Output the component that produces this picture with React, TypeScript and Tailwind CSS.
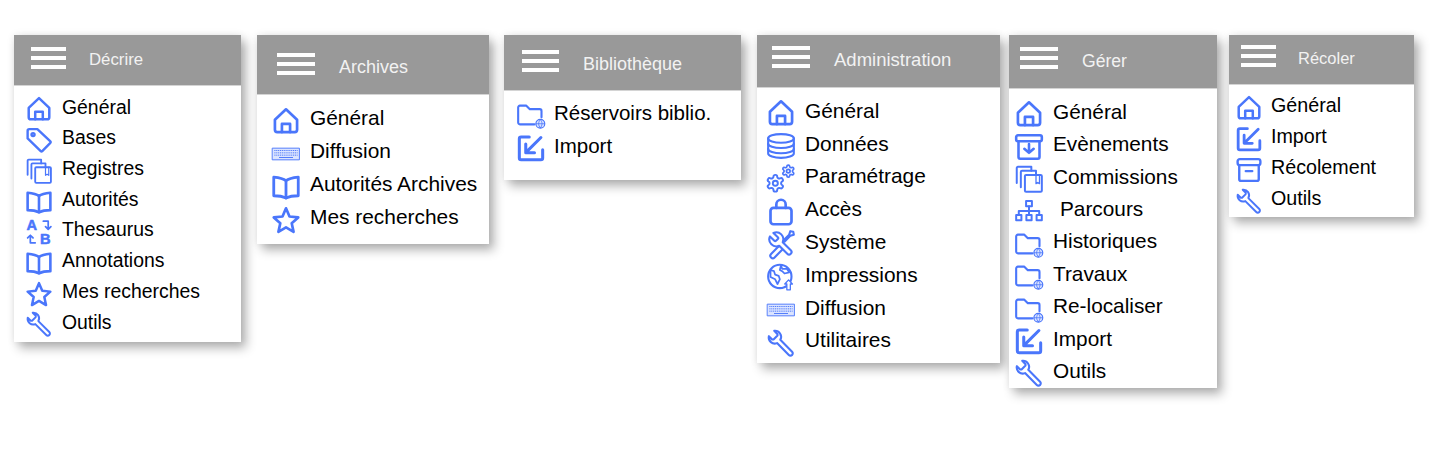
import type { ReactNode } from "react";

// Icons are hand drawn on a 24 unit grid, stroke colour comes from the svg wrapper
const BLUE = "#4a76fb";

function Svg({ size, w = 2, children }: { size: number; w?: number; children: ReactNode }) {
  return (
    <svg className="overflow-visible" width={size} height={size} viewBox="0 0 24 24" fill="none" stroke={BLUE} strokeWidth={w} strokeLinecap="round" strokeLinejoin="round">
      {children}
    </svg>
  );
}

const WRENCH = "M14.7 6.3a1 1 0 0 0 0 1.4l1.6 1.6a1 1 0 0 0 1.4 0l3.77-3.77a6 6 0 0 1-7.94 7.94l-6.91 6.91a2.12 2.12 0 0 1-3-3l6.91-6.91a6 6 0 0 1 7.94-7.94l-3.76 3.76z";
const GEAR = "M12.22 2h-.44a2 2 0 0 0-2 2v.18a2 2 0 0 1-1 1.73l-.43.25a2 2 0 0 1-2 0l-.15-.08a2 2 0 0 0-2.73.73l-.22.38a2 2 0 0 0 .73 2.73l.15.1a2 2 0 0 1 1 1.72v.51a2 2 0 0 1-1 1.74l-.15.09a2 2 0 0 0-.73 2.73l.22.38a2 2 0 0 0 2.73.73l.15-.08a2 2 0 0 1 2 0l.43.25a2 2 0 0 1 1 1.73V20a2 2 0 0 0 2 2h.44a2 2 0 0 0 2-2v-.18a2 2 0 0 1 1-1.73l.43-.25a2 2 0 0 1 2 0l.15.08a2 2 0 0 0 2.73-.73l.22-.39a2 2 0 0 0-.73-2.73l-.15-.08a2 2 0 0 1-1-1.74v-.5a2 2 0 0 1 1-1.74l.15-.09a2 2 0 0 0 .73-2.73l-.22-.38a2 2 0 0 0-2.73-.73l-.15.08a2 2 0 0 1-2 0l-.43-.25a2 2 0 0 1-1-1.73V4a2 2 0 0 0-2-2z";

const icons: Record<string, (size: number) => ReactNode> = {
  home: (s) => (
    <Svg size={s} w={2.300}>
      <path d="M12 2 2.500 11v8.500a2 2 0 0 0 2 2h15a2 2 0 0 0 2-2V11z" />
      <path d="M8.500 21.500v-7h7v7" />
    </Svg>
  ),
  tag: (s) => (
    <Svg size={s} w={2.200}>
      <path d="M1.500 3.500a1.500 1.500 0 0 1 1.500-1.500h7.500L22.500 13.200a1 1 0 0 1 0 1.400l-7.500 7.600a1 1 0 0 1-1.400 0L1.500 10.500z" />
      <circle cx="6.500" cy="7" r="1.400" />
    </Svg>
  ),
  registers: (s) => (
    <Svg size={s} w={1.700}>
      <rect x="8.500" y="8.500" width="14.500" height="14.500" rx="1" />
      <path d="M5 19V6a1 1 0 0 1 1-1h12v3.500" />
      <path d="M1.500 15.500V2.500a1 1 0 0 1 1-1H14V5" />
      <path d="M18 8.500V16l1.500-1 1.500 1V8.500" strokeWidth="1.100" />
    </Svg>
  ),
  book: (s) => (
    <Svg size={s} w={2.400}>
      <path d="M12 6.500C10 5 6 4 1.500 3.500v16c4.500 0 8.500 1 10.500 2 2-1 6-2 10.500-2v-16C18 4 14 5 12 6.500z" />
      <path d="M12 6.500v15" />
    </Svg>
  ),
  ab: (s) => (
    <Svg size={s} w={1.600}>
      <text x="0.500" y="10.500" fontFamily="'Liberation Sans', sans-serif" fontWeight="700" fontSize="13.500" fill={BLUE} stroke={BLUE} strokeWidth=".5">A</text>
      <text x="13" y="23.500" fontFamily="'Liberation Sans', sans-serif" fontWeight="700" fontSize="13.500" fill={BLUE} stroke={BLUE} strokeWidth=".5">B</text>
      <path d="M16 2h4.500v7M18 7l2.500 2.500L23 7" />
      <path d="M8.500 22H4v-7M1.500 17.500 4 15l2.500 2.500" />
    </Svg>
  ),
  star: (s) => (
    <Svg size={s} w={2.300}>
      <path d="M12 2l3 7 7.500.8-5.600 5 1.600 7.400L12 18.400l-6.500 3.800 1.600-7.400-5.600-5L9 9z" />
    </Svg>
  ),
  wrench: (s) => (
    <Svg size={s} w={1.800}>
      <path d="M6.200 1.600 9 4.400v1.200L5.600 9H4.400L1.600 6.200A5.200 5.200 0 0 0 8.600 12.100L18.700 22.200a1.900 1.900 0 0 0 2.800-2.800L11.400 9.300A5.200 5.200 0 0 0 6.200 1.600z" />
    </Svg>
  ),
  keyboard: (s) => (
    <Svg size={s} w={0.800}>
      <rect x="0.500" y="7" width="23" height="10" fill="#dbe4ff" />
      <path d="M2 9h20M2 11h20M2 13h20" strokeDasharray="1 .6" strokeLinecap="butt" />
      <path d="M6 15h12" strokeLinecap="butt" />
    </Svg>
  ),
  folder: (s) => (
    <Svg size={s} w={1.800}>
      <path d="M15 20H2.500A1.500 1.500 0 0 1 1 18.500V5.500A1.500 1.500 0 0 1 2.500 4H8l3 3h8.500A1.500 1.500 0 0 1 21 8.500V14" />
      <circle cx="20" cy="19.500" r="3.800" fill="#dbe4ff" strokeWidth="1" />
      <path d="M16.500 19.500h7M20 16c-2 2-2 5 0 7M20 16c2 2 2 5 0 7" strokeWidth=".7" />
    </Svg>
  ),
  importbox: (s) => (
    <Svg size={s} w={2.600}>
      <path d="M10.500 2.500H3.500a1.500 1.500 0 0 0-1.500 1.500v16.500a1.500 1.500 0 0 0 1.500 1.500h17a1.500 1.500 0 0 0 1.500-1.500v-7" />
      <path d="M20.500 3 7.500 16M7.500 8.500V16h7.500" />
    </Svg>
  ),
  database: (s) => (
    <Svg size={s} w={1.800}>
      <ellipse cx="12" cy="5.500" rx="11" ry="3.700" />
      <path d="M1 5.500v13c0 2 5 3.700 11 3.700s11-1.700 11-3.700v-13" />
      <path d="M1 10c0 2 5 3.700 11 3.700S23 12 23 10M1 14.500c0 2 5 3.700 11 3.700s11-1.700 11-3.700" />
    </Svg>
  ),
  gears: (s) => (
    <Svg size={s}>
      <g transform="translate(-1.500 7) scale(.72)" strokeWidth="2.300">
        <path d={GEAR} />
        <circle cx="12" cy="12" r="3" />
      </g>
      <g transform="translate(12 -1) scale(.52)" strokeWidth="2.800">
        <path d={GEAR} />
        <circle cx="12" cy="12" r="3" />
      </g>
    </Svg>
  ),
  lock: (s) => (
    <Svg size={s} w={2.300}>
      <rect x="3" y="8.500" width="18" height="14" rx="2.500" />
      <path d="M8 8.500V5.500a4 4 0 0 1 8 0v3" />
    </Svg>
  ),
  tools: (s) => (
    <Svg size={s} w={1.800}>
      <g transform="translate(24 0) scale(-1 1)">
        <path d={WRENCH} />
      </g>
      <path d="M22.500 1.500 20 1l-1 3-5 5 1 1 5-5 3-1z" />
      <path d="M10 14l-6.500 6.500a2 2 0 0 0 3 3L13 17" />
    </Svg>
  ),
  globe: (s) => (
    <Svg size={s} w={1.800}>
      <circle cx="11" cy="11.500" r="10" />
      <path d="M3 6l3 1 1 3 3 1 1 3-2 4-2-4-4-2zM12 2l1 3 4 0 2 3-4 1-2-2-2-1z" strokeWidth="1.500" />
      <path d="M17 23v-5h-1.800l3.300-3.500 3.300 3.500H20v5z" fill="#fff" strokeWidth="1.100" />
    </Svg>
  ),
  archive: (s) => (
    <Svg size={s} w={2.200}>
      <rect x="1" y="2" width="22" height="5" rx="1.500" />
      <path d="M3 7v13.500A1.500 1.500 0 0 0 4.500 22h15a1.500 1.500 0 0 0 1.500-1.500V7" />
      <path d="M12 9.500V17M8 13.500l4 3.500 4-3.500" />
    </Svg>
  ),
  sitemap: (s) => (
    <Svg size={s} w={1.700}>
      <rect x="9.500" y="3.500" width="5" height="4.500" />
      <rect x="1" y="15.500" width="4.500" height="4.500" />
      <rect x="9.750" y="15.500" width="4.500" height="4.500" />
      <rect x="18.500" y="15.500" width="4.500" height="4.500" />
      <path d="M12 8v7.500M3.250 15.500v-3.500h17.500v3.500" />
    </Svg>
  ),
  recolement: (s) => (
    <Svg size={s} w={2.200}>
      <rect x="1.500" y="2" width="21" height="5.500" rx="2" />
      <path d="M3 7.500v13A1.500 1.500 0 0 0 4.500 22h15a1.500 1.500 0 0 0 1.500-1.500v-13" />
      <path d="M9 13h6" />
    </Svg>
  ),
};

type Item = { label: string; icon: string; textClass?: string };

type PanelProps = {
  title: string;
  panelClass: string;
  headerClass: string;
  burgerClass: string;
  burgerWidth: number;
  titleClass: string;
  bodyClass: string;
  rowClass: string;
  iconBoxClass: string;
  iconSize: number;
  items: Item[];
};

function Burger({ width }: { width: number }) {
  return (
    <svg width={width} height="23" viewBox={`0 0 ${width} 23`} fill="#fff">
      <rect y="1" width={width} height="4" />
      <rect y="10" width={width} height="4" />
      <rect y="19" width={width} height="4" />
    </svg>
  );
}

function Panel(p: PanelProps) {
  return (
    <section className={`shrink-0 bg-white shadow-[5px_6px_10px_rgba(0,0,0,0.3),0_0_8px_rgba(0,0,0,0.08)] ${p.panelClass}`}>
      <header className={`flex border-b border-[#d4d4d4] bg-[#999999] ${p.headerClass}`}>
        <div className={`shrink-0 ${p.burgerClass}`}>
          <Burger width={p.burgerWidth} />
        </div>
        <span className={`leading-none text-[#f2f2f2] ${p.titleClass}`}>{p.title}</span>
      </header>
      <ul className={p.bodyClass}>
        {p.items.map((item) => (
          <li key={item.label} className={`flex items-center ${p.rowClass}`}>
            <span className={`flex shrink-0 translate-y-[2px] ${p.iconBoxClass}`}>{icons[item.icon](p.iconSize)}</span>
            <span className={`leading-none text-black ${item.textClass ?? ""}`}>{item.label}</span>
          </li>
        ))}
      </ul>
    </section>
  );
}

export default function App() {
  return (
    <div className="flex h-[453px] items-start overflow-hidden bg-white pt-[35px] pl-[14px] font-['Liberation_Sans',Arial,sans-serif]">
      <Panel
        title="Décrire"
        panelClass="mr-[16px] w-[227px]"
        headerClass="h-[51px]"
        burgerClass="mt-[11px] ml-[17px] mr-[23px]"
        burgerWidth={35}
        titleClass="mt-[17px] text-[16.8px]"
        bodyClass="pt-[6.100px] pb-[4.300px] pl-[12px] text-[19.400px]"
        rowClass="h-[30.700px]"
        iconBoxClass="w-[36px]"
        iconSize={26}
        items={[
          { label: "Général", icon: "home" },
          { label: "Bases", icon: "tag" },
          { label: "Registres", icon: "registers" },
          { label: "Autorités", icon: "book" },
          { label: "Thesaurus", icon: "ab" },
          { label: "Annotations", icon: "book" },
          { label: "Mes recherches", icon: "star" },
          { label: "Outils", icon: "wrench" },
        ]}
      />
      <Panel
        title="Archives"
        panelClass="mr-[15px] w-[232px]"
        headerClass="h-[60px]"
        burgerClass="mt-[17px] ml-[20px] mr-[24px]"
        burgerWidth={38}
        titleClass="mt-[23px] text-[18px]"
        bodyClass="pt-[7px] pb-[10px] pl-[15px] text-[20.900px]"
        rowClass="h-[33px]"
        iconBoxClass="w-[38px]"
        iconSize={28}
        items={[
          { label: "Général", icon: "home" },
          { label: "Diffusion", icon: "keyboard" },
          { label: "Autorités Archives", icon: "book" },
          { label: "Mes recherches", icon: "star" },
        ]}
      />
      <Panel
        title="Bibliothèque"
        panelClass="mr-[16px] w-[237px]"
        headerClass="h-[56px]"
        burgerClass="mt-[14px] ml-[18px] mr-[24px]"
        burgerWidth={37}
        titleClass="mt-[20px] text-[18px]"
        bodyClass="pt-[5.500px] pb-[17.500px] pl-[13px] text-[20.500px]"
        rowClass="h-[33px]"
        iconBoxClass="w-[37px]"
        iconSize={28}
        items={[
          { label: "Réservoirs biblio.", icon: "folder" },
          { label: "Import", icon: "importbox" },
        ]}
      />
      <Panel
        title="Administration"
        panelClass="mr-[9px] w-[243px]"
        headerClass="h-[53px]"
        burgerClass="mt-[10px] ml-[15px] mr-[24px]"
        burgerWidth={38}
        titleClass="mt-[16px] text-[18.500px]"
        bodyClass="pt-[6.800px] pb-[5.800px] pl-[10px] text-[20.900px]"
        rowClass="h-[32.800px]"
        iconBoxClass="w-[38px]"
        iconSize={28}
        items={[
          { label: "Général", icon: "home" },
          { label: "Données", icon: "database" },
          { label: "Paramétrage", icon: "gears" },
          { label: "Accès", icon: "lock" },
          { label: "Système", icon: "tools" },
          { label: "Impressions", icon: "globe" },
          { label: "Diffusion", icon: "keyboard" },
          { label: "Utilitaires", icon: "wrench" },
        ]}
      />
      <Panel
        title="Gérer"
        panelClass="mr-[12px] w-[208px]"
        headerClass="h-[54px]"
        burgerClass="mt-[11px] ml-[11px] mr-[24px]"
        burgerWidth={38}
        titleClass="mt-[18px] text-[17.600px]"
        bodyClass="pt-[7px] pb-[0.400px] pl-[6px] text-[20.800px]"
        rowClass="h-[32.400px]"
        iconBoxClass="w-[38px]"
        iconSize={28}
        items={[
          { label: "Général", icon: "home" },
          { label: "Evènements", icon: "archive" },
          { label: "Commissions", icon: "registers" },
          { label: "Parcours", icon: "sitemap", textClass: "ml-[7px]" },
          { label: "Historiques", icon: "folder" },
          { label: "Travaux", icon: "folder" },
          { label: "Re-localiser", icon: "folder" },
          { label: "Import", icon: "importbox" },
          { label: "Outils", icon: "wrench" },
        ]}
      />
      <Panel
        title="Récoler"
        panelClass="w-[185px]"
        headerClass="h-[50px]"
        burgerClass="mt-[9px] ml-[12px] mr-[22px]"
        burgerWidth={35}
        titleClass="mt-[15px] text-[16.500px]"
        bodyClass="pt-[5.500px] pb-[2.500px] pl-[7px] text-[19.700px]"
        rowClass="h-[31px]"
        iconBoxClass="w-[35px]"
        iconSize={26}
        items={[
          { label: "Général", icon: "home" },
          { label: "Import", icon: "importbox" },
          { label: "Récolement", icon: "recolement" },
          { label: "Outils", icon: "wrench" },
        ]}
      />
    </div>
  );
}
